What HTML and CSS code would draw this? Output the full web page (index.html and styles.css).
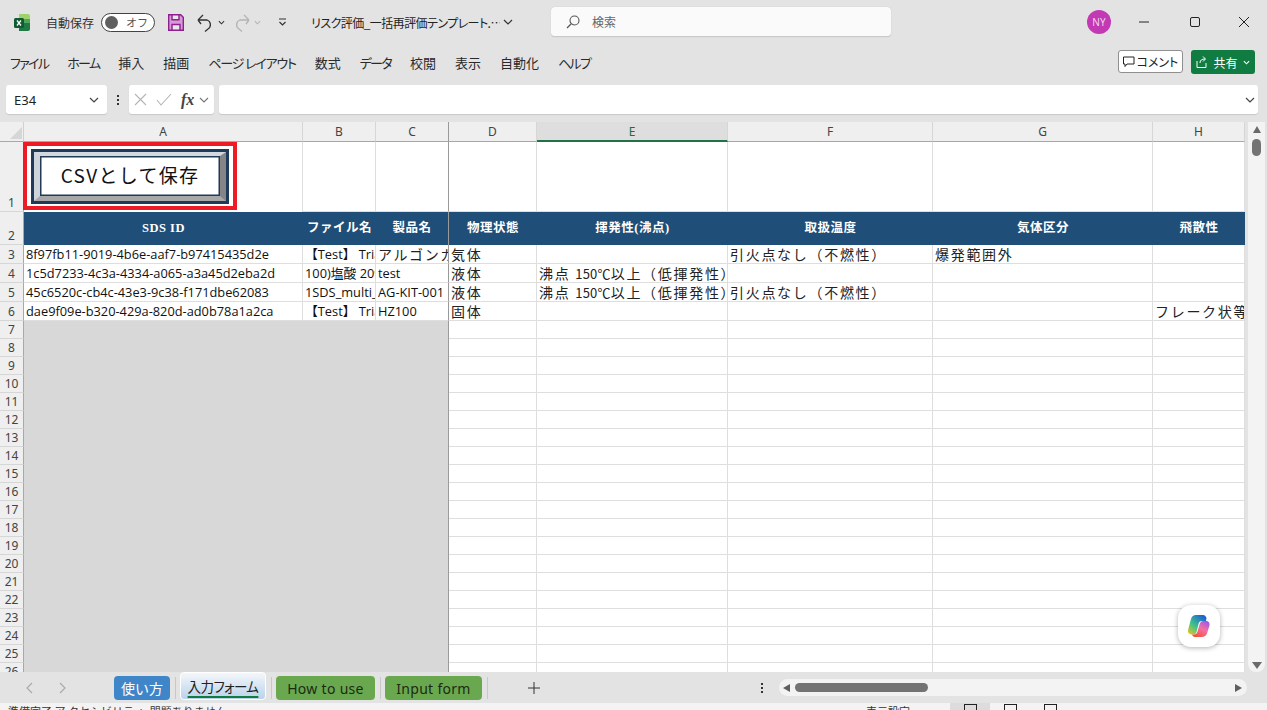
FILE: index.html
```html
<!DOCTYPE html>
<html lang="ja">
<head>
<meta charset="utf-8">
<title>リスク評価</title>
<link rel="stylesheet" href="styles.css">
</head>
<body>
<div class="app">
  <header class="titlebar">
    <svg class="xl" viewBox="0 0 16 17" width="16" height="17"><path fill="#9fd36a" d="M5 0h9a2 2 0 0 1 2 2v3H5z"/><path fill="#4fa75a" d="M5 5h11v4H5z"/><path fill="#1f7a43" d="M5 9h11v6a2 2 0 0 1-2 2H5z"/><rect x="0" y="4" width="10" height="10" rx="1.5" fill="#0f5c33"/><path d="M3 6.5l4 5M7 6.5l-4 5" stroke="#fff" stroke-width="1.3"/></svg>
    <span class="autosave">自動保存</span>
    <span class="toggle"><span class="knob"></span><span class="toggle-t">オフ</span></span>
    <svg class="save" viewBox="0 0 16 17" width="16" height="17"><path fill="#d89ad6" stroke="#8e1f8e" stroke-width="1.4" d="M.7.7h12l2.6 2.6v13H.7z"/><path fill="#e8e8e8" stroke="#8e1f8e" stroke-width="1.4" d="M4 .7h7v5H4zM4 10.500h8v5.800H4z"/></svg>
    <svg class="undo" viewBox="0 0 17 19" width="17" height="19"><path fill="none" stroke="#333" stroke-width="1.3" d="M1 7h9a5 5 0 0 1 1 9l-3 2.500M1 7l5-5M1 7l3 4"/></svg>
    <svg class="chev" viewBox="0 0 8 5" width="7" height="5"><path fill="none" stroke="#333" stroke-width="1.2" d="M1 1l3 3 3-3"/></svg>
    <svg class="redo" viewBox="0 0 17 19" width="17" height="19"><path fill="none" stroke="#b4b4b4" stroke-width="1.3" d="M16 7H7a5 5 0 0 0-1 9l3 2.500M16 7l-5-5M16 7l-3 4"/></svg>
    <svg class="chev" viewBox="0 0 8 5" width="7" height="5"><path fill="none" stroke="#b4b4b4" stroke-width="1.2" d="M1 1l3 3 3-3"/></svg>
    <svg class="qat" viewBox="0 0 9 8" width="9" height="8"><path fill="none" stroke="#333" stroke-width="1.2" d="M1 1h7M1.500 4L4.500 7l3-3"/></svg>
    <span class="doc">リスク評価_一括再評価テンプレート.…</span>
    <svg class="chev doc-chev" viewBox="0 0 10 6" width="10" height="6"><path fill="none" stroke="#333" stroke-width="1.200" d="M1 1l4 4 4-4"/></svg>
    <div class="search">
      <svg viewBox="0 0 14 14" width="14" height="14"><circle cx="8.500" cy="5.500" r="4.500" fill="none" stroke="#555" stroke-width="1.100"/><path d="M5 9l-4 4" stroke="#555" stroke-width="1.200"/></svg>
      <span>検索</span>
    </div>
    <span class="avatar">NY</span>
    <svg class="win win-min" viewBox="0 0 10 10" width="10" height="10"><path d="M0 5h10" stroke="#222" stroke-width="1"/></svg>
    <svg class="win win-max" viewBox="0 0 10 10" width="10" height="10"><rect x=".5" y=".5" width="9" height="9" rx="1.500" fill="none" stroke="#222"/></svg>
    <svg class="win win-close" viewBox="0 0 10 10" width="10" height="10"><path d="M0 0l10 10M10 0L0 10" stroke="#222"/></svg>
  </header>

  <nav class="menubar">
    <span class="kana">ファイル</span><span class="kana">ホーム</span><span>挿入</span><span>描画</span><span class="kana wide">ページ レイアウト</span><span>数式</span><span class="kana">データ</span><span>校閲</span><span>表示</span><span>自動化</span><span class="kana">ヘルプ</span>
    <div class="menu-actions">
      <button class="comment"><svg viewBox="0 0 12 12" width="12" height="12"><path fill="none" stroke="#222" d="M.5 1h10.500v7H4L2 10.500V8H.5z"/></svg>コメント</button>
      <button class="share"><svg viewBox="0 0 12 12" width="12" height="12"><path fill="none" stroke="#fff" d="M1 5v6.500h9V7M4 7c0-3 2-4 5-4M7 .5L9.500 3 7 5.500"/></svg>共有<svg viewBox="0 0 8 5" width="7" height="5"><path fill="none" stroke="#fff" stroke-width="1.300" d="M1 1l3 3 3-3"/></svg></button>
    </div>
  </nav>

  <div class="formulabar">
    <div class="namebox"><span>E34</span><svg viewBox="0 0 10 6" width="10" height="6"><path fill="none" stroke="#444" stroke-width="1.200" d="M1 1l4 4 4-4"/></svg></div>
    <span class="dots"><i></i><i></i><i></i></span>
    <div class="fxbox">
      <svg viewBox="0 0 13 13" width="13" height="13"><path d="M1 1l11 11M12 1L1 12" stroke="#b5b5b5" stroke-width="1.100"/></svg>
      <svg viewBox="0 0 16 13" width="16" height="13"><path d="M1 7l4 5L15 1" fill="none" stroke="#b5b5b5" stroke-width="1.100"/></svg>
      <span class="fx">fx</span>
      <svg class="fx-chev" viewBox="0 0 10 6" width="10" height="6"><path fill="none" stroke="#777" stroke-width="1.100" d="M1 1l4 4 4-4"/></svg>
    </div>
    <div class="input"><svg viewBox="0 0 10 6" width="10" height="6"><path fill="none" stroke="#444" stroke-width="1.200" d="M1 1l4 4 4-4"/></svg></div>
  </div>

  <main class="sheetwrap">
    <div class="sheet">
      <div class="corner"><svg viewBox="0 0 12 12" width="12" height="12"><path fill="#d6d6d6" d="M12 0v12H0z"/></svg></div>
      <div class="ch">A</div><div class="ch">B</div><div class="ch pane">C</div><div class="ch">D</div><div class="ch active">E</div><div class="ch">F</div><div class="ch">G</div><div class="ch">H</div>

      <div class="rh">1</div>
      <div class="c a1"><div class="frame"><div class="bevel"><div class="bevel-in">CSVとして保存</div></div></div></div>
      <div class="c"></div><div class="c pane"></div><div class="c"></div><div class="c"></div><div class="c"></div><div class="c"></div><div class="c"></div>

      <div class="rh">2</div>
      <div class="hd">SDS ID</div><div class="hd">ファイル名</div><div class="hd pane">製品名</div><div class="hd">物理状態</div><div class="hd">揮発性(沸点)</div><div class="hd">取扱温度</div><div class="hd">気体区分</div><div class="hd">飛散性</div>

      <div class="rh">3</div>
      <div class="c id">8f97fb11-9019-4b6e-aaf7-b97415435d2e</div><div class="c id">【Test】 Trial SDS</div><div class="c jp pane">アルゴンガス</div><div class="c jp">気体</div><div class="c"></div><div class="c jp">引火点なし（不燃性）</div><div class="c jp">爆発範囲外</div><div class="c"></div>

      <div class="rh">4</div>
      <div class="c id">1c5d7233-4c3a-4334-a065-a3a45d2eba2d</div><div class="c id">100)塩酸 20%</div><div class="c id pane">test</div><div class="c jp">液体</div><div class="c jp">沸点 <span class="num">150℃</span>以上（低揮発性）</div><div class="c"></div><div class="c"></div><div class="c"></div>

      <div class="rh">5</div>
      <div class="c id">45c6520c-cb4c-43e3-9c38-f171dbe62083</div><div class="c id">1SDS_multi_item</div><div class="c id pane">AG-KIT-001</div><div class="c jp">液体</div><div class="c jp">沸点 <span class="num">150℃</span>以上（低揮発性）</div><div class="c jp">引火点なし（不燃性）</div><div class="c"></div><div class="c"></div>

      <div class="rh">6</div>
      <div class="c id">dae9f09e-b320-429a-820d-ad0b78a1a2ca</div><div class="c id">【Test】 Trial SDS</div><div class="c id pane">HZ100</div><div class="c jp">固体</div><div class="c"></div><div class="c"></div><div class="c"></div><div class="c jp">フレーク状等</div>

      <div class="rh">7</div><div class="gray"></div><div class="c"></div><div class="c"></div><div class="c"></div><div class="c"></div><div class="c"></div>
      <div class="rh">8</div><div class="gray"></div><div class="c"></div><div class="c"></div><div class="c"></div><div class="c"></div><div class="c"></div>
      <div class="rh">9</div><div class="gray"></div><div class="c"></div><div class="c"></div><div class="c"></div><div class="c"></div><div class="c"></div>
      <div class="rh">10</div><div class="gray"></div><div class="c"></div><div class="c"></div><div class="c"></div><div class="c"></div><div class="c"></div>
      <div class="rh">11</div><div class="gray"></div><div class="c"></div><div class="c"></div><div class="c"></div><div class="c"></div><div class="c"></div>
      <div class="rh">12</div><div class="gray"></div><div class="c"></div><div class="c"></div><div class="c"></div><div class="c"></div><div class="c"></div>
      <div class="rh">13</div><div class="gray"></div><div class="c"></div><div class="c"></div><div class="c"></div><div class="c"></div><div class="c"></div>
      <div class="rh">14</div><div class="gray"></div><div class="c"></div><div class="c"></div><div class="c"></div><div class="c"></div><div class="c"></div>
      <div class="rh">15</div><div class="gray"></div><div class="c"></div><div class="c"></div><div class="c"></div><div class="c"></div><div class="c"></div>
      <div class="rh">16</div><div class="gray"></div><div class="c"></div><div class="c"></div><div class="c"></div><div class="c"></div><div class="c"></div>
      <div class="rh">17</div><div class="gray"></div><div class="c"></div><div class="c"></div><div class="c"></div><div class="c"></div><div class="c"></div>
      <div class="rh">18</div><div class="gray"></div><div class="c"></div><div class="c"></div><div class="c"></div><div class="c"></div><div class="c"></div>
      <div class="rh">19</div><div class="gray"></div><div class="c"></div><div class="c"></div><div class="c"></div><div class="c"></div><div class="c"></div>
      <div class="rh">20</div><div class="gray"></div><div class="c"></div><div class="c"></div><div class="c"></div><div class="c"></div><div class="c"></div>
      <div class="rh">21</div><div class="gray"></div><div class="c"></div><div class="c"></div><div class="c"></div><div class="c"></div><div class="c"></div>
      <div class="rh">22</div><div class="gray"></div><div class="c"></div><div class="c"></div><div class="c"></div><div class="c"></div><div class="c"></div>
      <div class="rh">23</div><div class="gray"></div><div class="c"></div><div class="c"></div><div class="c"></div><div class="c"></div><div class="c"></div>
      <div class="rh">24</div><div class="gray"></div><div class="c"></div><div class="c"></div><div class="c"></div><div class="c"></div><div class="c"></div>
      <div class="rh">25</div><div class="gray"></div><div class="c"></div><div class="c"></div><div class="c"></div><div class="c"></div><div class="c"></div>
      <div class="rh">26</div><div class="gray"></div><div class="c"></div><div class="c"></div><div class="c"></div><div class="c"></div><div class="c"></div>
    </div>
    <div class="vscroll">
      <span class="tri-up"></span>
      <span class="vthumb"></span>
      <span class="tri-down"></span>
    </div>
    <div class="copilot">
      <svg viewBox="0 0 24 24" width="24" height="24">
        <defs>
          <linearGradient id="g1" x1="0" y1="1" x2=".8" y2="0"><stop offset="0" stop-color="#f5c518"/><stop offset=".45" stop-color="#3fc28a"/><stop offset="1" stop-color="#1a5fd8"/></linearGradient>
          <linearGradient id="g2" x1=".2" y1="1" x2=".8" y2="0"><stop offset="0" stop-color="#f0522e"/><stop offset=".55" stop-color="#f56fa6"/><stop offset="1" stop-color="#9a5be8"/></linearGradient>
        </defs>
        <path fill="url(#g1)" d="M9 1h7c2 0 3 1.500 3.500 3L19 7h-4c-2 0-3 1-3.500 3l-2 8c-.5 2-2 2.500-3.500 2.500H4C1.500 20 .5 18 1 16l3-11C4.800 2.500 6.500 1 9 1z"/>
        <path fill="url(#g2)" d="M15 23H8c-1.500 0-2.500-1-3-2.500h2c2 0 3-1 3.500-3l2-7c.5-2 2-3.500 3.500-3.500h3c2.500 0 4 2 3.500 4.500l-2.500 8c-.8 2-2.500 3.500-5.500 3.500z"/>
      </svg>
    </div>
  </main>

  <footer class="tabbar">
    <svg class="nav nav-l" viewBox="0 0 7 12" width="7" height="12"><path fill="none" stroke="#a8a8a8" stroke-width="1.100" d="M6 1L1 6l5 5"/></svg>
    <svg class="nav nav-r" viewBox="0 0 7 12" width="7" height="12"><path fill="none" stroke="#a8a8a8" stroke-width="1.100" d="M1 1l5 5-5 5"/></svg>
    <span class="tab blue">使い方</span><i class="sep"></i>
    <span class="tab cur">入力フォーム</span><i class="sep"></i>
    <span class="tab green">How to use</span><i class="sep"></i>
    <span class="tab green">Input form</span><i class="sep"></i>
    <svg class="plus" viewBox="0 0 12 12" width="12" height="12"><path d="M6 0v12M0 6h12" stroke="#333" stroke-width="1"/></svg>
    <span class="dots dots-h"><i></i><i></i><i></i></span>
    <div class="hscroll">
      <span class="tri-left"></span>
      <span class="hthumb"></span>
      <span class="tri-right"></span>
    </div>
  </footer>

  <div class="status">
    <span class="st-left">準備完了 ア クセシビリティ: 問題ありません</span>
    <span class="st-disp">表示設定</span>
    <span class="st-view on"><i class="vi"></i></span>
    <span class="st-view"><i class="vi"></i></span>
    <span class="st-view"><i class="vi"></i></span>
  </div>
</div>
</body>
</html>
```

FILE: styles.css
```css
* { box-sizing: border-box; }
html, body { margin: 0; padding: 0; height: 100%; overflow: hidden; }
body {
  font-family: "Noto Sans CJK JP", "Noto Sans", sans-serif;
  color: #222;
  background: #e3e3e3;
}
.app { width: 1267px; height: 710px; display: flex; flex-direction: column; }

/* title bar */
.titlebar { height: 44px; display: flex; align-items: center; padding-left: 14px; font-size: 12px; flex: none; }
.xl { margin-right: 16px; }
.autosave { width: 48px; font-size: 12px; color: #333; white-space: nowrap; }
.toggle {
  margin-left: 7px; width: 54px; height: 19px; border: 1px solid #444; border-radius: 10px; background: #fff;
  display: flex; align-items: center; padding-left: 3px;
}
.knob { width: 13px; height: 13px; border-radius: 50%; background: #5f5f5f; }
.toggle-t { margin-left: 8px; font-size: 11px; color: #555; line-height: 1; }
.save { margin-left: 13px; }
.undo { margin-left: 13px; }
.chev { margin-left: 4px; flex: none; }
.redo { margin-left: 8px; }
.qat { margin-left: 17px; }
.doc { margin-left: 24px; width: 189px; font-size: 12px; font-feature-settings: "palt"; letter-spacing: -.55px; white-space: nowrap; overflow: hidden; }
.doc-chev { margin-left: 3px; }
.search {
  margin-left: 38px; width: 340px; height: 30px; background: #fafafa; border-radius: 4px;
  border-bottom: 1px solid #c9c9c9; box-shadow: 0 0 1px #bbb;
  display: flex; align-items: center; padding-left: 15px; gap: 12px; font-size: 12px; color: #666;
}
.avatar {
  margin-left: 196px; width: 24px; height: 24px; border-radius: 50%; background: #c239b3; color: #f3d5ef;
  font-family: "Noto Sans", sans-serif; font-size: 10px; display: flex; align-items: center; justify-content: center;
}
.win { flex: none; }
.win-min { margin-left: 28px; }
.win-max { margin-left: 41px; }
.win-close { margin-left: 39px; }

/* menu */
.menubar {
  height: 36px; display: flex; align-items: center; padding-left: 10px; gap: 19px; font-size: 13px;
  font-feature-settings: "palt"; flex: none; white-space: nowrap; color: #2a2a2a;
}
.kana { letter-spacing: -1.700px; }
.kana.wide { letter-spacing: -1.200px; }
.menu-actions { margin-left: auto; display: flex; gap: 8px; padding-right: 12px; }
.menu-actions button { font-family: inherit; font-size: 12px; font-feature-settings: "palt"; display: flex; align-items: center; padding: 0; }
.comment { width: 65px; height: 23px; background: #fff; border: 1px solid #8f8f8f; border-radius: 3px; justify-content: center; gap: 2px; color: #222; }
.share { width: 64px; height: 24px; background: #107c41; border: 0; border-radius: 3px; justify-content: center; gap: 5px; color: #fff; }

/* formula bar */
.formulabar { height: 36px; padding: 5px 9px 2px 6px; display: flex; gap: 0; flex: none; align-items: stretch; margin-bottom: 6px; }
.namebox {
  width: 101px; background: #fff; border-radius: 3px; box-shadow: 0 1px 1px #c8c8c8;
  display: flex; align-items: center; justify-content: space-between; padding: 0 8px;
  font-family: "Noto Sans", sans-serif; font-size: 13px;
}
.dots { width: 22px; display: flex; flex-direction: column; align-items: center; justify-content: center; gap: 2px; }
.dots i { width: 2px; height: 2px; background: #333; display: block; }
.fxbox {
  width: 85px; background: #fff; border-radius: 3px; box-shadow: 0 1px 1px #c8c8c8;
  display: flex; align-items: center; padding-left: 5px; gap: 9px;
}
.fx-chev { margin-left: -4px; }
.fx { font-family: "Liberation Serif", serif; font-style: italic; font-weight: bold; font-size: 16px; color: #444; line-height: 1; }
.input {
  margin-left: 5px; flex: 1; background: #fff; border-radius: 3px; box-shadow: 0 1px 1px #c8c8c8;
  display: flex; align-items: center; justify-content: flex-end; padding-right: 3px;
}

/* sheet */
.sheetwrap { position: relative; height: 550px; display: flex; flex: none; overflow: hidden; }
.sheet {
  width: 1245px; height: 550px; overflow: hidden; background: #fff; display: grid; flex: none;
  grid-template-columns: 24px 279px 73px 73px 88px 191px 205px 220px 92px;
  grid-template-rows: 20px 70px 33px 19px 19px 19px 19px;
  grid-auto-rows: 18px;
}
.corner { background: #efefef; border-right: 1px solid #d0d0d0; border-bottom: 1px solid #a8a8a8; display: flex; align-items: flex-end; justify-content: flex-end; padding: 0 1px 2px 0; }
.ch {
  background: #efefef; border-right: 1px solid #d6d6d6; border-bottom: 1px solid #a8a8a8;
  font-family: "Noto Sans", sans-serif; font-size: 12px; color: #444; text-align: center; line-height: 20px;
}
.ch.active { background: #dedede; color: #1b6e3e; border-bottom: 2px solid #217346; }
.rh {
  background: #efefef; border-right: 1px solid #a8a8a8; border-bottom: 1px solid #d6d6d6;
  font-family: "Noto Sans", sans-serif; font-size: 12px; color: #444; text-align: center;
  display: flex; align-items: flex-end; justify-content: center; line-height: 16px;
}
.c {
  border-right: 1px solid #dedede; border-bottom: 1px solid #dedede; background: #fff; overflow: hidden; white-space: nowrap;
  padding-left: 2px; line-height: 18px;
}
.id { font-family: "Open Sans", "Noto Sans CJK JP", sans-serif; font-size: 12.800px; color: #111; }
.jp { font-size: 14px; letter-spacing: 1.700px; color: #222; }
.num { font-size: 13px; letter-spacing: .2px; }
.pane { border-right: 1px solid #9a9a9a; }
.c.a1 { padding: 0 0 2px 0; overflow: visible; border-right: 1px solid #dedede; border-bottom: 0; position: relative; z-index: 1; }
.frame { margin-left: -1px; width: 214px; height: 68px; border: 4px solid #ed1c24; background: #fff; padding: 3px 3px 2px 4px; }
.bevel {
  height: 55px; width: 198px; border: 3px solid #203a5a; background: #fff;
}
.bevel-in {
  height: 49px; border-style: solid; border-width: 4px 6px 5px 6px; border-color: #d3d7de #858585 #a8a8a8 #cfd3da;
  box-shadow: inset 0 0 0 1.500px #203a5a;
  font-size: 19px; letter-spacing: 1.300px; color: #111; text-align: center; line-height: 38px; white-space: nowrap;
}
.hd {
  background: #1f4e78; color: #fff; font-family: "Liberation Serif", "Noto Sans CJK JP", serif; font-size: 12.500px; font-weight: 700; text-align: center; line-height: 33px;
  white-space: nowrap; overflow: hidden; letter-spacing: .5px;
}
.hd.pane { border-right: 1px solid #9a9a9a; }
.gray { grid-column: span 3; background: #d8d8d8; border-right: 1px solid #9a9a9a; }

.vscroll {
  flex: 1; margin-left: 3px; margin-right: 2px; background: #f3f3f3; border-radius: 0 0 8px 8px; display: flex; flex-direction: column; align-items: center; padding: 4px 0 3px;
}
.tri-up { width: 0; height: 0; border: 4px solid transparent; border-top: 0; border-bottom: 7px solid #6a6a6a; }
.vthumb { width: 9px; height: 17px; margin-top: 6px; border-radius: 5px; background: #737373; }
.tri-down { width: 0; height: 0; margin-top: auto; border: 5px solid transparent; border-bottom: 0; border-top: 7px solid #6a6a6a; }
.copilot {
  position: absolute; left: 1178px; top: 483px; width: 42px; height: 42px; background: #fff; border-radius: 13px;
  box-shadow: 0 1px 5px rgba(0,0,0,.3); display: flex; align-items: center; justify-content: center;
}

/* tabs */
.tabbar { height: 32px; display: flex; align-items: flex-start; flex: none; position: relative; padding-top: 4px; }
.nav { margin-top: 6px; }
.nav-l { margin-left: 26px; }
.nav-r { margin-left: 26px; margin-right: 48px; }
.tab { height: 24px; border-radius: 4px; display: flex; align-items: center; justify-content: center; font-size: 14px; white-space: nowrap; }
.blue { width: 56px; background: #3f86c9; color: #fff; }
.cur {
  width: 86px; height: 28px; margin-top: -4px; background: linear-gradient(#f4f7fb, #b9d2ea); border: 1.500px solid #fff;
  font-size: 13.500px; color: #222; font-feature-settings: "palt"; letter-spacing: -.6px; border-radius: 4px;
  text-decoration: underline; text-decoration-color: #107c41; text-decoration-thickness: 2px; text-underline-offset: 4px;
}
.green { background: #6aa84f; color: #1c2a14; font-family: "Noto Sans", sans-serif; letter-spacing: .3px; }
.green:nth-of-type(3) { width: 99px; }
.green:nth-of-type(4) { width: 97px; }
.sep { width: 1px; height: 22px; margin: 1px 4px 0 5px; background: #c8c8c8; display: block; flex: none; }
.plus { margin: 6px 0 0 36px; }
.dots-h { width: 4px; height: 24px; margin-left: 220px; }
.hscroll {
  margin-left: 15px; margin-top: 3px; width: 468px; height: 17px; border-radius: 9px; background: #f3f3f3;
  display: flex; align-items: center; padding: 0 4px;
}
.tri-left { width: 0; height: 0; border: 4.500px solid transparent; border-left: 0; border-right: 7px solid #5f5f5f; }
.tri-right { width: 0; height: 0; margin-left: auto; margin-right: 1px; border: 4.500px solid transparent; border-right: 0; border-left: 7px solid #5f5f5f; }
.hthumb { width: 133px; height: 9px; margin-left: 5px; border-radius: 5px; background: #737373; }

/* status */
.status { height: 6px; margin-top: -1px; background: #f3f3f3; display: flex; flex: 1; overflow: hidden; font-size: 11px; line-height: 1; padding-left: 8px; color: #333; }
.st-left { padding-top: 3px; white-space: nowrap; width: 858px; }
.st-disp { padding-top: 3px; white-space: nowrap; width: 84px; }
.st-view { width: 40px; display: flex; justify-content: center; padding-top: 1px; }
.st-view.on { background: #dcdcdc; }
.vi { display: block; width: 13px; height: 12px; border: 1px solid #222; }
```
